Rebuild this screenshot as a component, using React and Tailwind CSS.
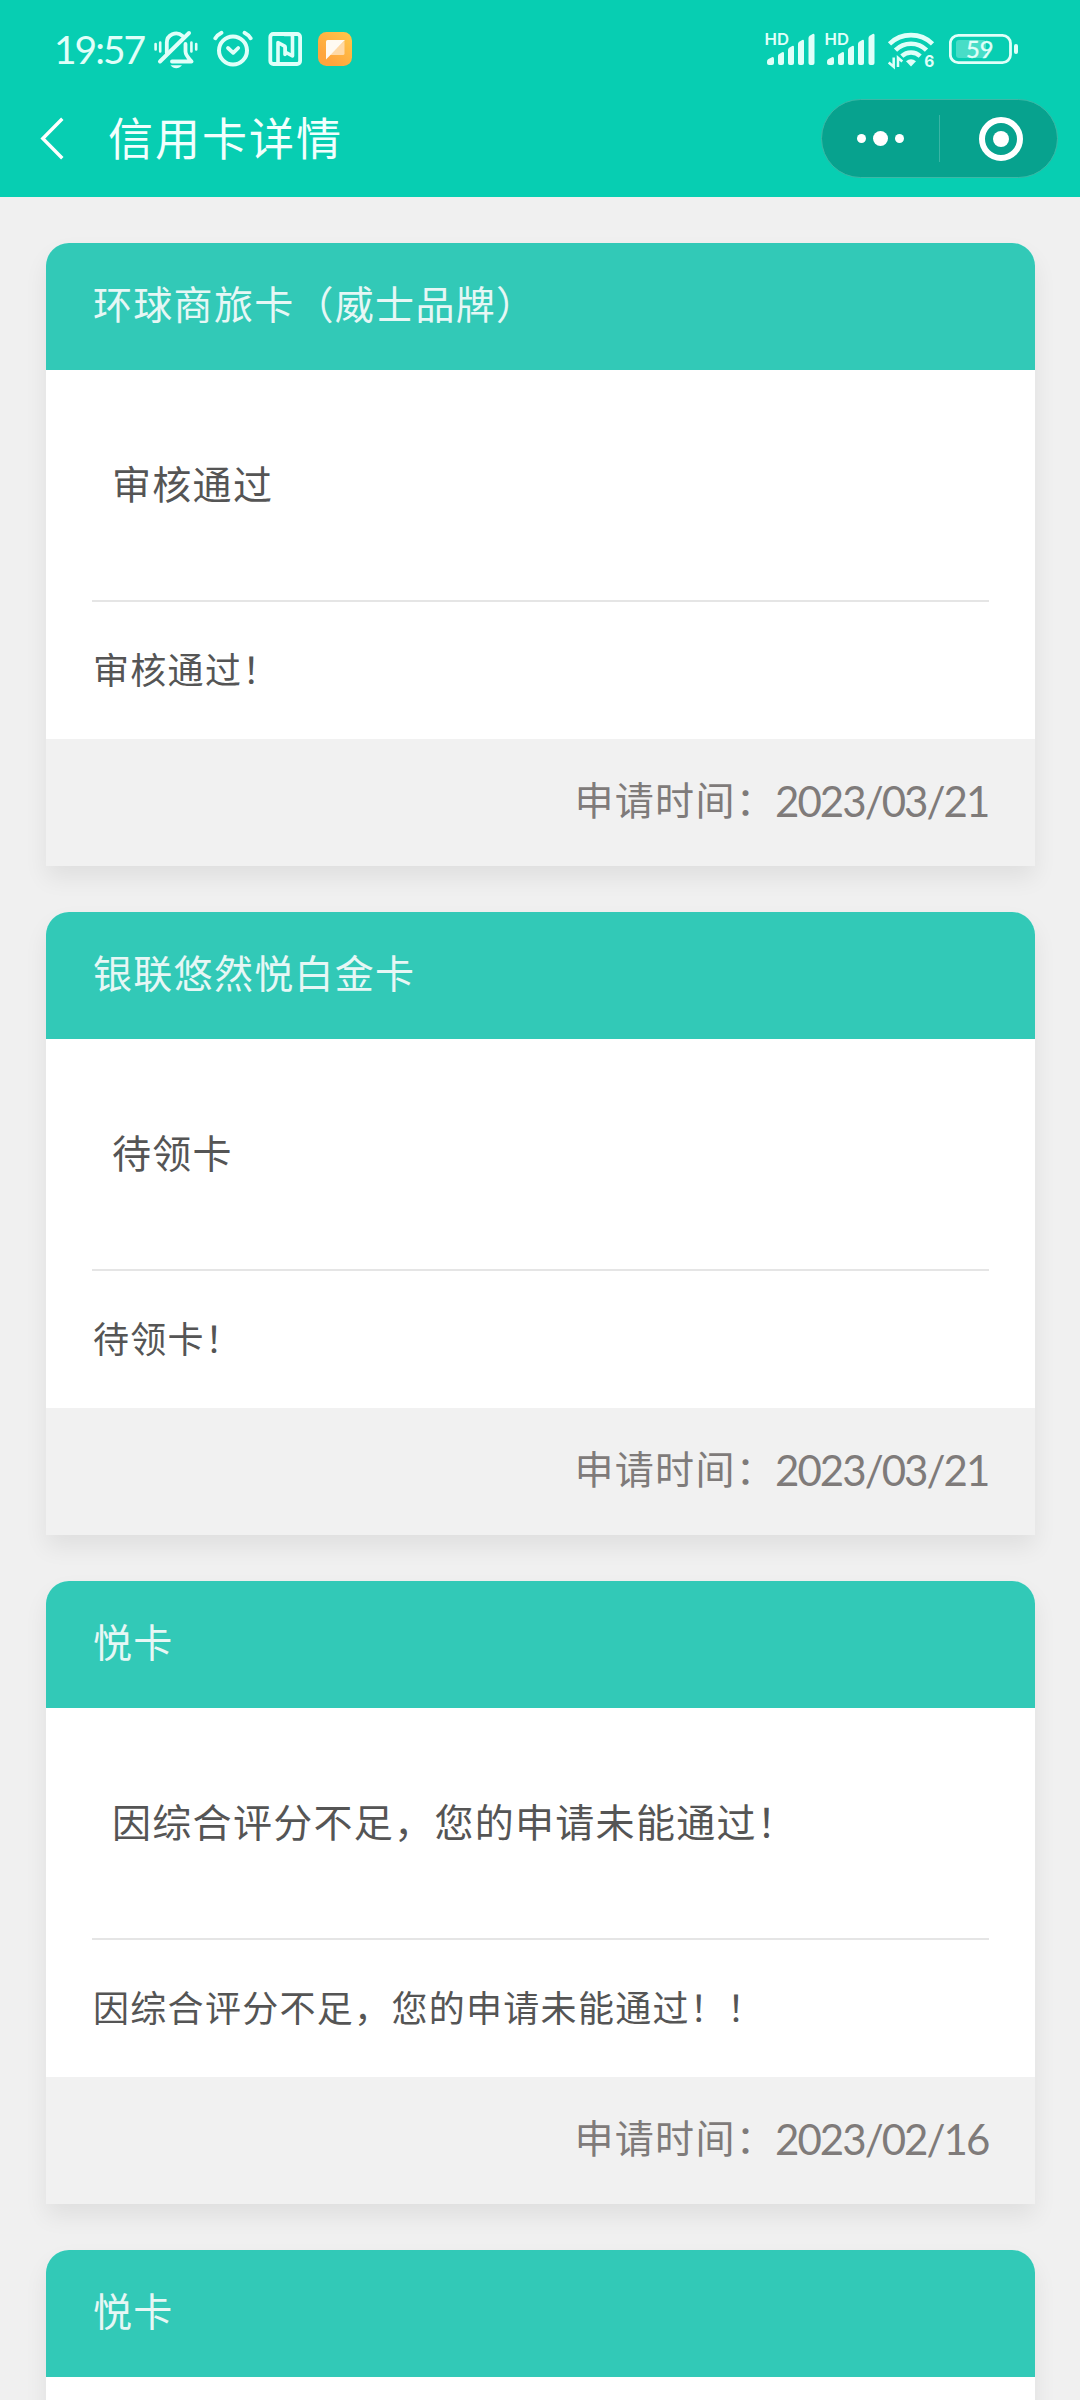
const CARDS = [
  { name: "环球商旅卡（威士品牌）", status: "审核通过", detail: "审核通过！", date: "2023/03/21" },
  { name: "银联悠然悦白金卡", status: "待领卡", detail: "待领卡！", date: "2023/03/21" },
  {
    name: "悦卡",
    status: "因综合评分不足，您的申请未能通过！",
    detail: "因综合评分不足，您的申请未能通过！！",
    date: "2023/02/16",
  },
  { name: "悦卡" },
];

const ICON = "#e0fff9";

function MutedBell() {
  return (
    <svg className="w-11 h-10" viewBox="154 30 44 40" fill="none" stroke={ICON} strokeLinecap="round" strokeLinejoin="round">
      <path d="M166.800 53V43a9.300 9.300 0 0 1 15.600-7.100M185.500 44v7.500c0 3.500 2.500 6 6 10H172" strokeWidth="3.800" />
      <path d="M160 61.500L189 33" strokeWidth="4" />
      <path d="M155.600 44v5.500M160.200 42.500v9M191.400 42.500v9M196.200 44v5.500" strokeWidth="2.600" />
      <path d="M170.500 65.200h11.500c-1.600 2-3.600 3-5.800 3s-4.200-1-5.700-3z" fill={ICON} stroke="none" />
    </svg>
  );
}

function AlarmClock() {
  return (
    <svg className="w-10 h-10" viewBox="212.500 30 40 40" fill="none" stroke={ICON} strokeLinecap="round" strokeLinejoin="round">
      <circle cx="232.500" cy="50.500" r="14" strokeWidth="4" />
      <path d="M227.500 48l5.200 4.800 5-4.800" strokeWidth="3.800" />
      <path d="M214.800 38.300q2.500-3.600 6.200-5.500M250.200 38.300q-2.500-3.600-6.200-5.500" strokeWidth="3.800" />
    </svg>
  );
}

function Nfc() {
  return (
    <svg className="w-[34px] h-10" viewBox="267.500 30 34 40" fill="none" stroke={ICON} strokeLinecap="round" strokeLinejoin="round">
      <rect x="269.800" y="34" width="29.800" height="30" rx="3" strokeWidth="3.800" />
      <path d="M277.500 62V42.500l7 3.800v8.200M284 34.500h6c1.500 0 2 .8 2 2V56l-7.300-4v-5" strokeWidth="3.600" />
    </svg>
  );
}

function AppBadge() {
  return (
    <svg className="w-[34px] h-10" viewBox="318 30 34 40">
      <defs>
        <linearGradient id="badge" x1="1" y1="0" x2="0.3" y2="0.8">
          <stop offset="0" stopColor="#ffc84a" />
          <stop offset="1" stopColor="#ffa53d" />
        </linearGradient>
      </defs>
      <rect x="318" y="32" width="34" height="34" rx="8.500" fill="url(#badge)" />
      <path d="M344.500 41v12.500a1.500 1.500 0 0 1-1.500 1.500h-13.500z" fill="#ffd9a6" />
      <path d="M327.500 40h17.500L326 59.500V41.500q0-1.500 1.500-1.500z" fill="#fffaf2" />
    </svg>
  );
}

function Signal() {
  return (
    <svg className="w-[51px] h-10" viewBox="765 30 51 40" fill={ICON}>
      <text x="764.500" y="45" fontFamily="Inter, sans-serif" fontSize="16" fontWeight="600" textLength="24.500" lengthAdjust="spacingAndGlyphs">
        HD
      </text>
      <path d="M767 61.500q0-1.500 1.500-2.400l3.500-1.900q2-.7 2 1.500v4.300q0 2-2 2h-3q-2 0-2-2z" />
      <path d="M778 56q0-1.400 1.200-2l3-1.800q1.800-.6 1.800 1.200V63q0 2-2 2h-2q-2 0-2-2z" />
      <path d="M788 50q0-1.400 1.200-2.200l3-1.800q1.800-.6 1.800 1.200V63q0 2-2 2h-2q-2 0-2-2z" />
      <path d="M798 44q0-1.400 1.200-2.200l3-1.800q1.800-.6 1.800 1.200V63q0 2-2 2h-2q-2 0-2-2z" />
      <path d="M808.500 38q0-1.400 1.200-2.200l3-1.800q1.800-.6 1.800 1.200V63q0 2-2 2h-2q-2 0-2-2z" />
    </svg>
  );
}

function Wifi() {
  return (
    <svg className="w-[48px] h-10" viewBox="887 30 48 40" fill="none" stroke={ICON}>
      <path d="M889.500 43.800a31 31 0 0 1 43 0M895.500 50.200a22 22 0 0 1 31 0" strokeWidth="4.600" />
      <path d="M901.800 56.200a13.300 13.300 0 0 1 18.400 0" strokeWidth="4.400" />
      <path d="M906 61.300q5-4.200 10 0L911 66.500z" fill={ICON} stroke="none" />
      <path d="M893.700 57.500v9.300l-5-4.300M898 67v-9.300l4.300 3.800" strokeWidth="2.500" />
      <text x="924.300" y="67" fill={ICON} stroke="none" fontFamily="Inter, sans-serif" fontSize="15.500" fontWeight="700">
        6
      </text>
    </svg>
  );
}

function Battery() {
  return (
    <svg className="w-[70px] h-10" viewBox="949 30 70 40">
      <rect x="950.300" y="35.300" width="60.200" height="27.400" rx="8" fill="none" stroke={ICON} strokeWidth="2.800" />
      <rect x="956" y="40" width="30" height="18" rx="3" fill={ICON} fillOpacity="0.3" />
      <rect x="1014" y="44" width="4" height="10" rx="2" fill={ICON} />
      <text x="966" y="58" fill={ICON} fontFamily="Lato, sans-serif" fontSize="24" stroke={ICON} strokeWidth="0.400" textLength="27.500" lengthAdjust="spacingAndGlyphs">
        59
      </text>
    </svg>
  );
}

function StatusBar() {
  return (
    <div className="flex justify-between h-[98px] pt-[30px] pl-[54px] pr-[61px]">
      <div className="flex">
        <span className="w-[100px] text-[39px] leading-[39px] tracking-[-2px] text-[#e0fff9] font-[Lato,sans-serif]">19:57</span>
        <MutedBell />
        <div className="ml-[14.500px]"><AlarmClock /></div>
        <div className="ml-[15px]"><Nfc /></div>
        <div className="ml-[16.500px]"><AppBadge /></div>
      </div>
      <div className="flex">
        <Signal />
        <div className="ml-[9px]"><Signal /></div>
        <div className="ml-[11px]"><Wifi /></div>
        <div className="ml-[14px]"><Battery /></div>
      </div>
    </div>
  );
}

function NavBar() {
  return (
    <div className="flex items-start pl-[40px] pr-[22px]">
      <svg className="w-6 h-[80px]" viewBox="40 98 24 80" fill="none" stroke="#fff" strokeWidth="3.400">
        <path d="M62.300 118.800L42.800 138.500l19.500 19.700" />
      </svg>
      <h1 className="ml-[44px] text-[45px] leading-[77px] tracking-[2px] text-[#f2fffd]">信用卡详情</h1>
      <div className="flex items-center ml-auto mt-px w-[237px] h-[79px] rounded-full border border-[#3cb8a6] bg-[#07a28e]">
        <div className="flex w-[117px] items-center justify-center gap-[7px]">
          <i className="w-[9px] h-[9px] rounded-full bg-white" />
          <i className="w-[15px] h-[15px] rounded-full bg-white" />
          <i className="w-[9px] h-[9px] rounded-full bg-white" />
        </div>
        <div className="w-px h-[47px] bg-[#39b5a5]" />
        <div className="flex flex-1 items-center justify-center pl-[4px]">
          <div className="flex items-center justify-center w-11 h-11 rounded-full border-[6px] border-white">
            <i className="w-4 h-4 rounded-full bg-white" />
          </div>
        </div>
      </div>
    </div>
  );
}

function CreditCard({ name, status, detail, date }) {
  return (
    <section className="shrink-0 rounded-t-[23px] bg-white shadow-[0_12px_23px_rgba(0,0,0,0.07)] whitespace-nowrap">
      <div className="h-[127px] rounded-t-[23px] bg-[#32c9b7] pl-[47px] text-[39px] leading-[119px] tracking-[1.300px] text-[#e6f7f5]">
        {name}
      </div>
      <div className="h-[369px] px-[46px] text-[#555]">
        {status && (
          <>
            <p className="h-[232px] pl-[20px] border-b-2 border-[#e5e5e5] text-[39px] leading-[225px] tracking-[1.300px]">{status}</p>
            <p className="pl-px text-[36px] leading-[132px] tracking-[1.300px]">{detail}</p>
          </>
        )}
      </div>
      {date && (
        <div className="flex justify-end h-[127px] bg-[#f1f1f1] pr-[47px] text-[39px] leading-[119px] tracking-[1.300px] text-[#7f7b7a]">
          <span>申请时间：</span>
          <span className="-ml-px w-[213px] text-[42px] leading-[124px] tracking-[-1.950px] font-[Lato,sans-serif]">{date}</span>
        </div>
      )}
    </section>
  );
}

export default function App() {
  return (
    <div className="w-[1080px] h-[2400px] overflow-hidden bg-[#f0f0f0] font-['Noto_Sans_CJK_SC',sans-serif]">
      <header className="h-[197px] bg-[#07ceb2]">
        <StatusBar />
        <NavBar />
      </header>
      <main className="flex flex-col gap-[46px] px-[46px] pt-[46px] pr-[45px]">
        {CARDS.map((card, i) => (
          <CreditCard key={i} {...card} />
        ))}
      </main>
    </div>
  );
}
